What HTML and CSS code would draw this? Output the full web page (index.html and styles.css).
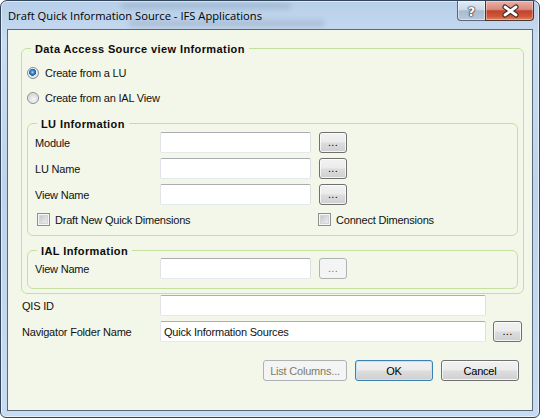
FILE: index.html
```html
<!DOCTYPE html>
<html>
<head>
<meta charset="utf-8">
<link rel="stylesheet" href="styles.css">
</head>
<body>
<div class="window">
  <div class="titlebar">
    <span class="ghost ghost-a"></span>
    <span class="ghost ghost-b"></span>
    <span class="title">Draft Quick Information Source - IFS Applications</span>
    <div class="caption">
      <div class="cap-help"><span class="qmark">?</span></div>
      <div class="cap-close">
        <svg width="48" height="19" viewBox="0 0 48 19">
          <path d="M19 6 L30 14 M30 6 L19 14" stroke="#3b2a28" stroke-width="5" stroke-linecap="round" fill="none"/>
          <path d="M19 6 L30 14 M30 6 L19 14" stroke="#ffffff" stroke-width="2.8" stroke-linecap="round" fill="none"/>
        </svg>
      </div>
    </div>
  </div>
  <div class="client">
    <div class="group outer">
      <div class="legend">Data Access Source view Information</div>
      <div class="radio-row"><span class="radio checked"></span><span>Create from a LU</span></div>
      <div class="radio-row"><span class="radio"></span><span>Create from an IAL View</span></div>

      <div class="group inner lu">
        <div class="legend">LU Information</div>
        <div class="field-row sub first"><span class="label">Module</span><div class="input short"></div><div class="btn dots">...</div></div>
        <div class="field-row sub"><span class="label">LU Name</span><div class="input short"></div><div class="btn dots">...</div></div>
        <div class="field-row sub"><span class="label">View Name</span><div class="input short"></div><div class="btn dots">...</div></div>
        <div class="check-row">
          <div class="check-item wide"><span class="check"></span><span>Draft New Quick Dimensions</span></div>
          <div class="check-item"><span class="check"></span><span>Connect Dimensions</span></div>
        </div>
      </div>

      <div class="group inner ial">
        <div class="legend">IAL Information</div>
        <div class="field-row sub flush"><span class="label">View Name</span><div class="input short"></div><div class="btn dots disabled">...</div></div>
      </div>
    </div>

    <div class="field-row main first-main"><span class="label">QIS ID</span><div class="input long"></div></div>
    <div class="field-row main"><span class="label">Navigator Folder Name</span><div class="input long"><span class="value">Quick Information Sources</span></div><div class="btn dots nav">...</div></div>

    <div class="btn-row">
      <div class="btn push list disabled">List Columns...</div>
      <div class="btn push ok">OK</div>
      <div class="btn push">Cancel</div>
    </div>
  </div>
</div>
</body>
</html>
```
FILE: styles.css
```css
* { box-sizing: border-box; }

body {
  margin: 0;
  width: 540px;
  height: 418px;
  overflow: hidden;
  background: #ffffff;
  font-family: "Liberation Sans", Arial, sans-serif;
  font-size: 11px;
  letter-spacing: -0.2px;
  color: #111111;
}

.window {
  width: 540px;
  height: 418px;
  border: 1px solid #33465c;
  border-radius: 7px 7px 6px 6px;
  background: linear-gradient(180deg, #b7cfe9 0%, #c9dcf1 10%, #bfd4ec 45%, #c7dbf1 100%);
  box-shadow: inset 0 0 0 1px rgba(255, 255, 255, 0.55);
  display: flex;
  flex-direction: column;
  overflow: hidden;
}

/* ---------- title bar ---------- */
.titlebar {
  position: relative;
  flex: none;
  height: 28px;
  display: flex;
}

.ghost {
  position: absolute;
  background: rgba(90, 105, 130, 0.2);
  filter: blur(2.5px);
  border-radius: 3px;
}
.ghost-a { left: 120px; top: 2px; width: 170px; height: 6px; }
.ghost-b { left: 128px; top: 19px; width: 195px; height: 7px; }

.title {
  position: relative;
  align-self: center;
  padding-left: 7px;
  margin-top: 1px;
  font-family: "Open Sans", "Liberation Sans", sans-serif;
  font-size: 11.2px;
  letter-spacing: 0;
  color: #000000;
}

.caption {
  margin-left: auto;
  margin-right: 5px;
  display: flex;
  height: 20px;
  position: relative;
}

.cap-help {
  width: 28px;
  height: 20px;
  border: 1px solid #56667b;
  border-top: none;
  border-right: none;
  border-radius: 0 0 0 4px;
  background: linear-gradient(180deg, #e3ebf4 0%, #ccd9e8 45%, #a9bbd0 52%, #b8c9dc 100%);
  box-shadow: inset 0 0 0 1px rgba(255, 255, 255, 0.45);
  display: flex;
  align-items: center;
  justify-content: center;
}

.qmark {
  font-family: "DejaVu Sans", sans-serif;
  font-weight: bold;
  font-size: 13px;
  line-height: 13px;
  letter-spacing: 0;
  color: #ffffff;
  margin-top: 1px;
  text-shadow: 0 0 1px #2c3a4a, 0 0 1px #2c3a4a, 0 0 1px #2c3a4a, 0 0 2px #2c3a4a;
}

.cap-close {
  width: 49px;
  height: 20px;
  border: 1px solid #4a3632;
  border-top: none;
  border-radius: 0 0 4px 0;
  background: linear-gradient(180deg, #eab0a5 0%, #d98a7c 44%, #c2432d 52%, #cf5538 80%, #e08660 100%);
  box-shadow: inset 0 0 0 1px rgba(255, 255, 255, 0.35);
}
.cap-close svg { display: block; }

/* ---------- client ---------- */
.client {
  flex: none;
  height: 382px;
  margin: 0 6px;
  border: 1px solid #58697e;
  background: #f3f7e9;
}

.group {
  border: 1px solid #c4e09e;
  border-radius: 6px;
}

.legend {
  width: max-content;
  margin: -7px 0 0 9px;
  padding: 0 4px;
  line-height: 14px;
  font-weight: bold;
  letter-spacing: 0.4px;
  color: #0c0c0c;
  background: #f3f7e9;
}

.outer {
  width: 503px;
  margin: 18px 0 0 13px;
  padding-bottom: 4px;
}

.radio-row {
  display: flex;
  align-items: center;
  gap: 6px;
  height: 16px;
  margin: 9px 0 0 5px;
}

.radio {
  width: 12px;
  height: 12px;
  border-radius: 50%;
  border: 1px solid #8c8e91;
  background: radial-gradient(circle at 55% 60%, #f7f7f7 0, #e9e9ea 2.5px, #c9cacc 6px);
  box-shadow: inset 0 0 0 1px rgba(255, 255, 255, 0.6);
}
.radio.checked {
  background: radial-gradient(circle at 45% 42%, #b4e2fd 0, #3f95d8 1.5px, #17589f 3.3px, #f4f4f4 3.9px, #e4e4e5 4.5px, #c9cacc 6px);
}

.inner {
  margin: 0 5px 0 5px;
}
.lu {
  margin-top: 17px;
  padding-bottom: 8px;
}
.ial {
  margin-top: 14px;
  padding-bottom: 9px;
}

.field-row {
  display: flex;
  align-items: center;
  height: 21px;
  margin-top: 5px;
}
.field-row.first { margin-top: 1px; }
.field-row.flush { margin-top: 0; }
.field-row.first-main { margin-top: 1px; }

.label {
  flex: none;
  white-space: nowrap;
}
.sub .label {
  width: 132px;
  padding-left: 7px;
}
.main .label {
  width: 152px;
  padding-left: 14px;
}

.input {
  flex: none;
  height: 21px;
  background: #ffffff;
  border: 1px solid;
  border-color: #abadb3 #dbdfe6 #e3e9ef #e2e3ea;
  border-radius: 2px;
  display: flex;
  align-items: center;
}
.input.short { width: 151px; }
.input.long { width: 326px; }
.value { padding-left: 3px; white-space: nowrap; }

.btn {
  flex: none;
  height: 21px;
  border: 1px solid #707070;
  border-radius: 3px;
  background: linear-gradient(180deg, #f2f2f2 0%, #ebebeb 48%, #dddddd 52%, #cfcfcf 100%);
  box-shadow: inset 0 0 0 1px rgba(255, 255, 255, 0.75);
  display: flex;
  align-items: center;
  justify-content: center;
  color: #000000;
  white-space: nowrap;
}
.btn.dots {
  width: 28px;
  margin-left: 8px;
  padding-bottom: 1px;
  letter-spacing: 0.3px;
}
.btn.dots.nav {
  width: 29px;
  margin-left: 7px;
}
.btn.disabled {
  border-color: #adb2b5;
  background: #f4f4f4;
  box-shadow: none;
  color: #7a7f62;
}

.check-row {
  display: flex;
  align-items: center;
  height: 15px;
  margin-top: 7px;
  padding-left: 9px;
}
.check-item {
  display: flex;
  align-items: center;
  gap: 5px;
}
.check-item.wide { width: 281px; }

.check {
  flex: none;
  width: 13px;
  height: 13px;
  border: 1px solid #8e8f8f;
  background: linear-gradient(135deg, #b9bdc3 0%, #dcdee1 55%, #f2f2f2 100%);
  box-shadow: inset 0 0 0 1px #f6f6f6, inset 0 0 0 2px #d2d4d8;
}

.btn-row {
  display: flex;
  justify-content: flex-end;
  gap: 8px;
  margin-top: 18px;
  padding-right: 13px;
}
.btn.push { width: 78px; }
.btn.push.list { width: 84px; }
.btn.ok {
  border-color: #3c7fb1;
  box-shadow: inset 0 0 0 1px #bfe6fb;
}
```
